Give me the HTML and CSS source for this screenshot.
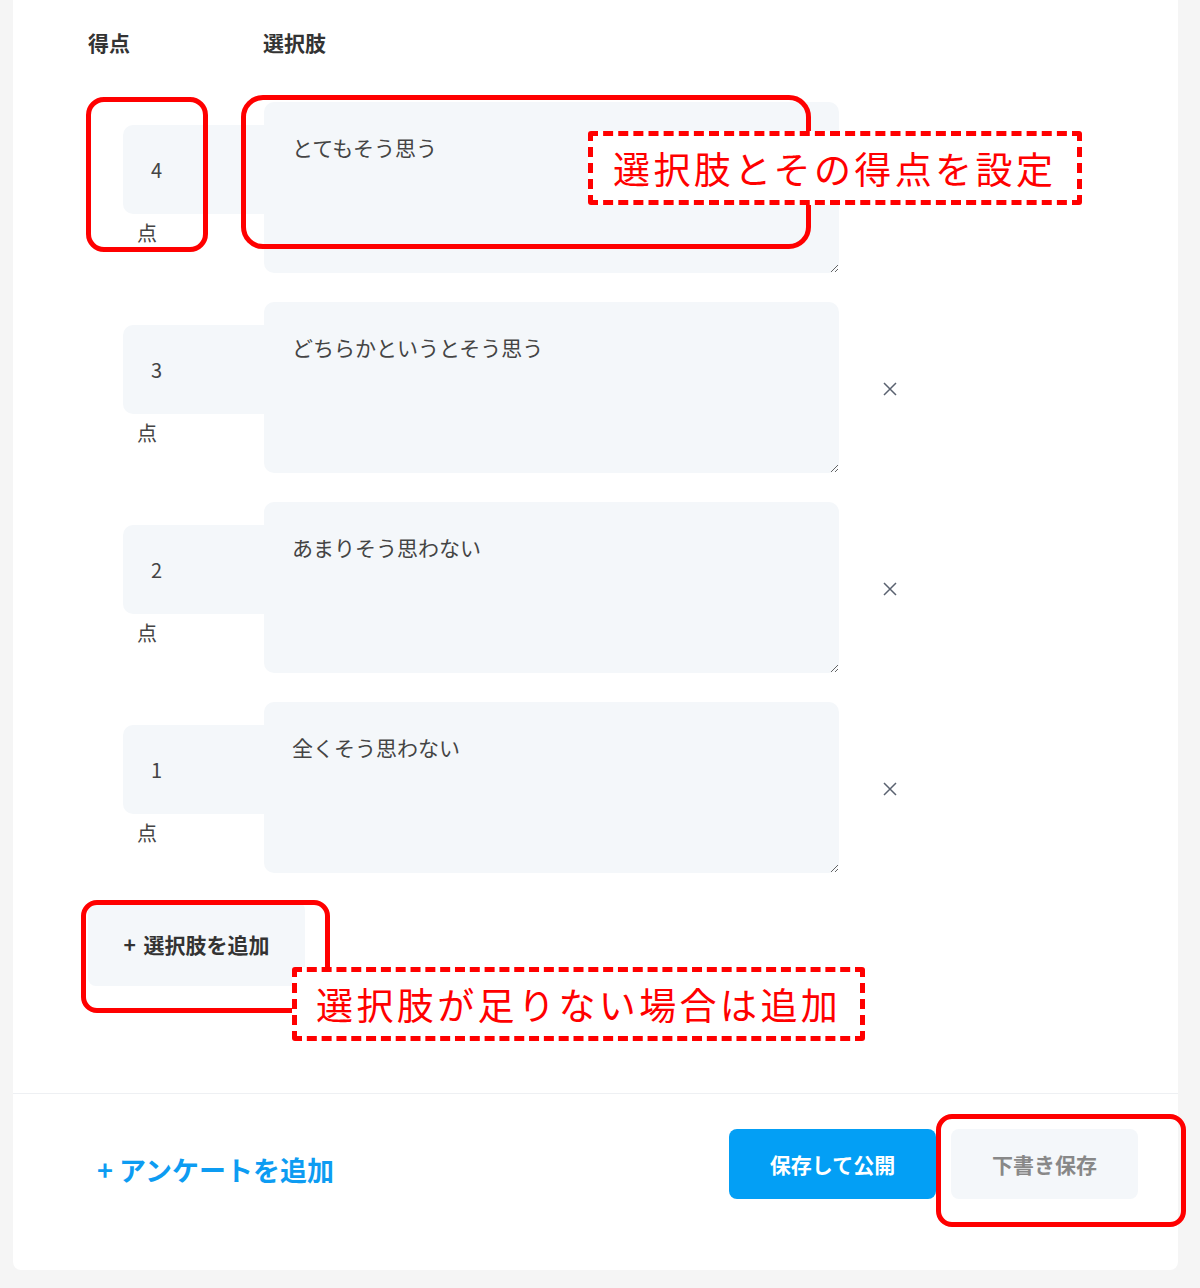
FILE: index.html
```html
<!DOCTYPE html>
<html lang="ja">
<head>
    <meta charset="UTF-8">
    <meta name="viewport" content="width=device-width, initial-scale=1.0">
    <title>アンケート 選択肢の設定</title>
    <link rel="stylesheet" href="styles.css">
</head>
<body>
    <div class="page">
        <div class="card">
            <div class="card-body">
                <div class="choice-head">
                    <div>得点</div>
                    <div>選択肢</div>
                </div>

                <div class="choice-row">
                    <div class="score">
                        <input class="score-input" type="text" value="4">
                        <div class="score-unit">点</div>
                    </div>
                    <textarea class="choice-text">とてもそう思う</textarea>
                    <div class="remove"></div>
                </div>

                <div class="choice-row">
                    <div class="score">
                        <input class="score-input" type="text" value="3">
                        <div class="score-unit">点</div>
                    </div>
                    <textarea class="choice-text">どちらかというとそう思う</textarea>
                    <div class="remove">
                        <svg width="16" height="16" viewBox="0 0 16 16"><path d="M2 2L14 14M14 2L2 14" stroke="#5a6270" stroke-width="1.5" fill="none"/></svg>
                    </div>
                </div>

                <div class="choice-row">
                    <div class="score">
                        <input class="score-input" type="text" value="2">
                        <div class="score-unit">点</div>
                    </div>
                    <textarea class="choice-text">あまりそう思わない</textarea>
                    <div class="remove">
                        <svg width="16" height="16" viewBox="0 0 16 16"><path d="M2 2L14 14M14 2L2 14" stroke="#5a6270" stroke-width="1.5" fill="none"/></svg>
                    </div>
                </div>

                <div class="choice-row">
                    <div class="score">
                        <input class="score-input" type="text" value="1">
                        <div class="score-unit">点</div>
                    </div>
                    <textarea class="choice-text">全くそう思わない</textarea>
                    <div class="remove">
                        <svg width="16" height="16" viewBox="0 0 16 16"><path d="M2 2L14 14M14 2L2 14" stroke="#5a6270" stroke-width="1.5" fill="none"/></svg>
                    </div>
                </div>

                <button class="add-choice">+ 選択肢を追加</button>
            </div>

            <div class="card-foot">
                <a class="add-survey" href="#">+ アンケートを追加</a>
                <div class="actions">
                    <button class="btn btn-publish">保存して公開</button>
                    <button class="btn btn-draft">下書き保存</button>
                </div>
            </div>
        </div>

        <!-- 注釈 -->
        <div class="mark mark-score"></div>
        <div class="mark mark-text"></div>
        <div class="note note-top">選択肢とその得点を設定</div>
        <div class="mark mark-add"></div>
        <div class="note note-add">選択肢が足りない場合は追加</div>
        <div class="mark mark-draft"></div>
    </div>
</body>
</html>
```

FILE: styles.css
```css
body {
    margin: 0;
    background: #f5f5f5;
    font-family: "Noto Sans CJK JP", "Noto Sans", sans-serif;
    color: #333;
}

.page {
    position: relative;
    width: 1200px;
    height: 1288px;
    overflow: hidden;
}

.card {
    margin: 0 22px 0 13px;
    background: #fff;
    border-radius: 0 0 8px 8px;
}

.card-body {
    padding: 29px 0 107px 75px;
    border-bottom: 1px solid #eef0f3;
}

.choice-head {
    display: grid;
    grid-template-columns: 175px auto;
    font-size: 21px;
    font-weight: bold;
    line-height: 26px;
    color: #333;
    margin-bottom: 47px;
}

.choice-row {
    display: grid;
    grid-template-columns: 176px 575px 1fr;
    height: 171px;
    margin-bottom: 29px;
}

.score {
    padding-top: 23px;
}

.score-input {
    box-sizing: border-box;
    display: block;
    width: 141px;
    height: 89px;
    margin-left: 35px;
    padding: 0 0 0 28px;
    border: none;
    border-radius: 10px 0 0 10px;
    background: #f4f7fa;
    font-family: inherit;
    font-size: 20px;
    color: #444;
    outline: none;
}

.score-unit {
    margin: 6px 0 0 49px;
    font-size: 20px;
    line-height: 26px;
    color: #444;
}

.choice-text {
    box-sizing: border-box;
    display: block;
    width: 575px;
    height: 171px;
    padding: 30px 28px;
    border: none;
    border-radius: 10px;
    background: #f4f7fa;
    font-family: inherit;
    font-size: 21px;
    line-height: 30px;
    color: #444;
    outline: none;
}

.remove {
    display: flex;
    align-items: center;
    padding-left: 43px;
}

.remove svg {
    display: block;
    margin-top: 3px;
}

.add-choice {
    display: block;
    width: 217px;
    height: 84px;
    margin-top: 7px;
    border: none;
    border-radius: 8px;
    background: #f4f7fa;
    font-family: inherit;
    font-size: 21px;
    font-weight: bold;
    word-spacing: 3px;
    color: #333;
}

.card-foot {
    display: flex;
    justify-content: space-between;
    align-items: flex-start;
    padding: 35px 40px 71px 84px;
}

.add-survey {
    padding-top: 23px;
    font-size: 27px;
    font-weight: bold;
    line-height: 36px;
    color: #0d9cf2;
    text-decoration: none;
}

.actions {
    display: flex;
    gap: 15px;
}

.btn {
    height: 70px;
    border: none;
    border-radius: 8px;
    font-family: inherit;
    font-size: 21px;
    font-weight: bold;
}

.btn-publish {
    width: 207px;
    background: #039ff5;
    color: #fff;
}

.btn-draft {
    width: 187px;
    background: #f4f7fa;
    color: #888;
}

/* 赤い注釈 */
.mark {
    position: absolute;
    box-sizing: border-box;
    border: 5px solid #f00;
}

.mark-score {
    left: 86px;
    top: 97px;
    width: 122px;
    height: 155px;
    border-radius: 18px;
}

.mark-text {
    left: 241px;
    top: 95px;
    width: 570px;
    height: 154px;
    border-radius: 22px;
}

.mark-add {
    left: 81px;
    top: 900px;
    width: 249px;
    height: 113px;
    border-radius: 16px;
}

.mark-draft {
    left: 936px;
    top: 1114px;
    width: 250px;
    height: 113px;
    border-radius: 16px;
}

.note {
    position: absolute;
    box-sizing: border-box;
    display: flex;
    align-items: center;
    height: 74px;
    padding-left: 20px;
    border: 5px dashed #f00;
    border-radius: 3px;
    background: #fff;
    font-size: 37px;
    letter-spacing: 3.4px;
    color: #f00;
    white-space: nowrap;
}

.note-top {
    left: 588px;
    top: 131px;
    width: 494px;
}

.note-add {
    left: 292px;
    top: 967px;
    width: 573px;
    padding-left: 19px;
}
```
